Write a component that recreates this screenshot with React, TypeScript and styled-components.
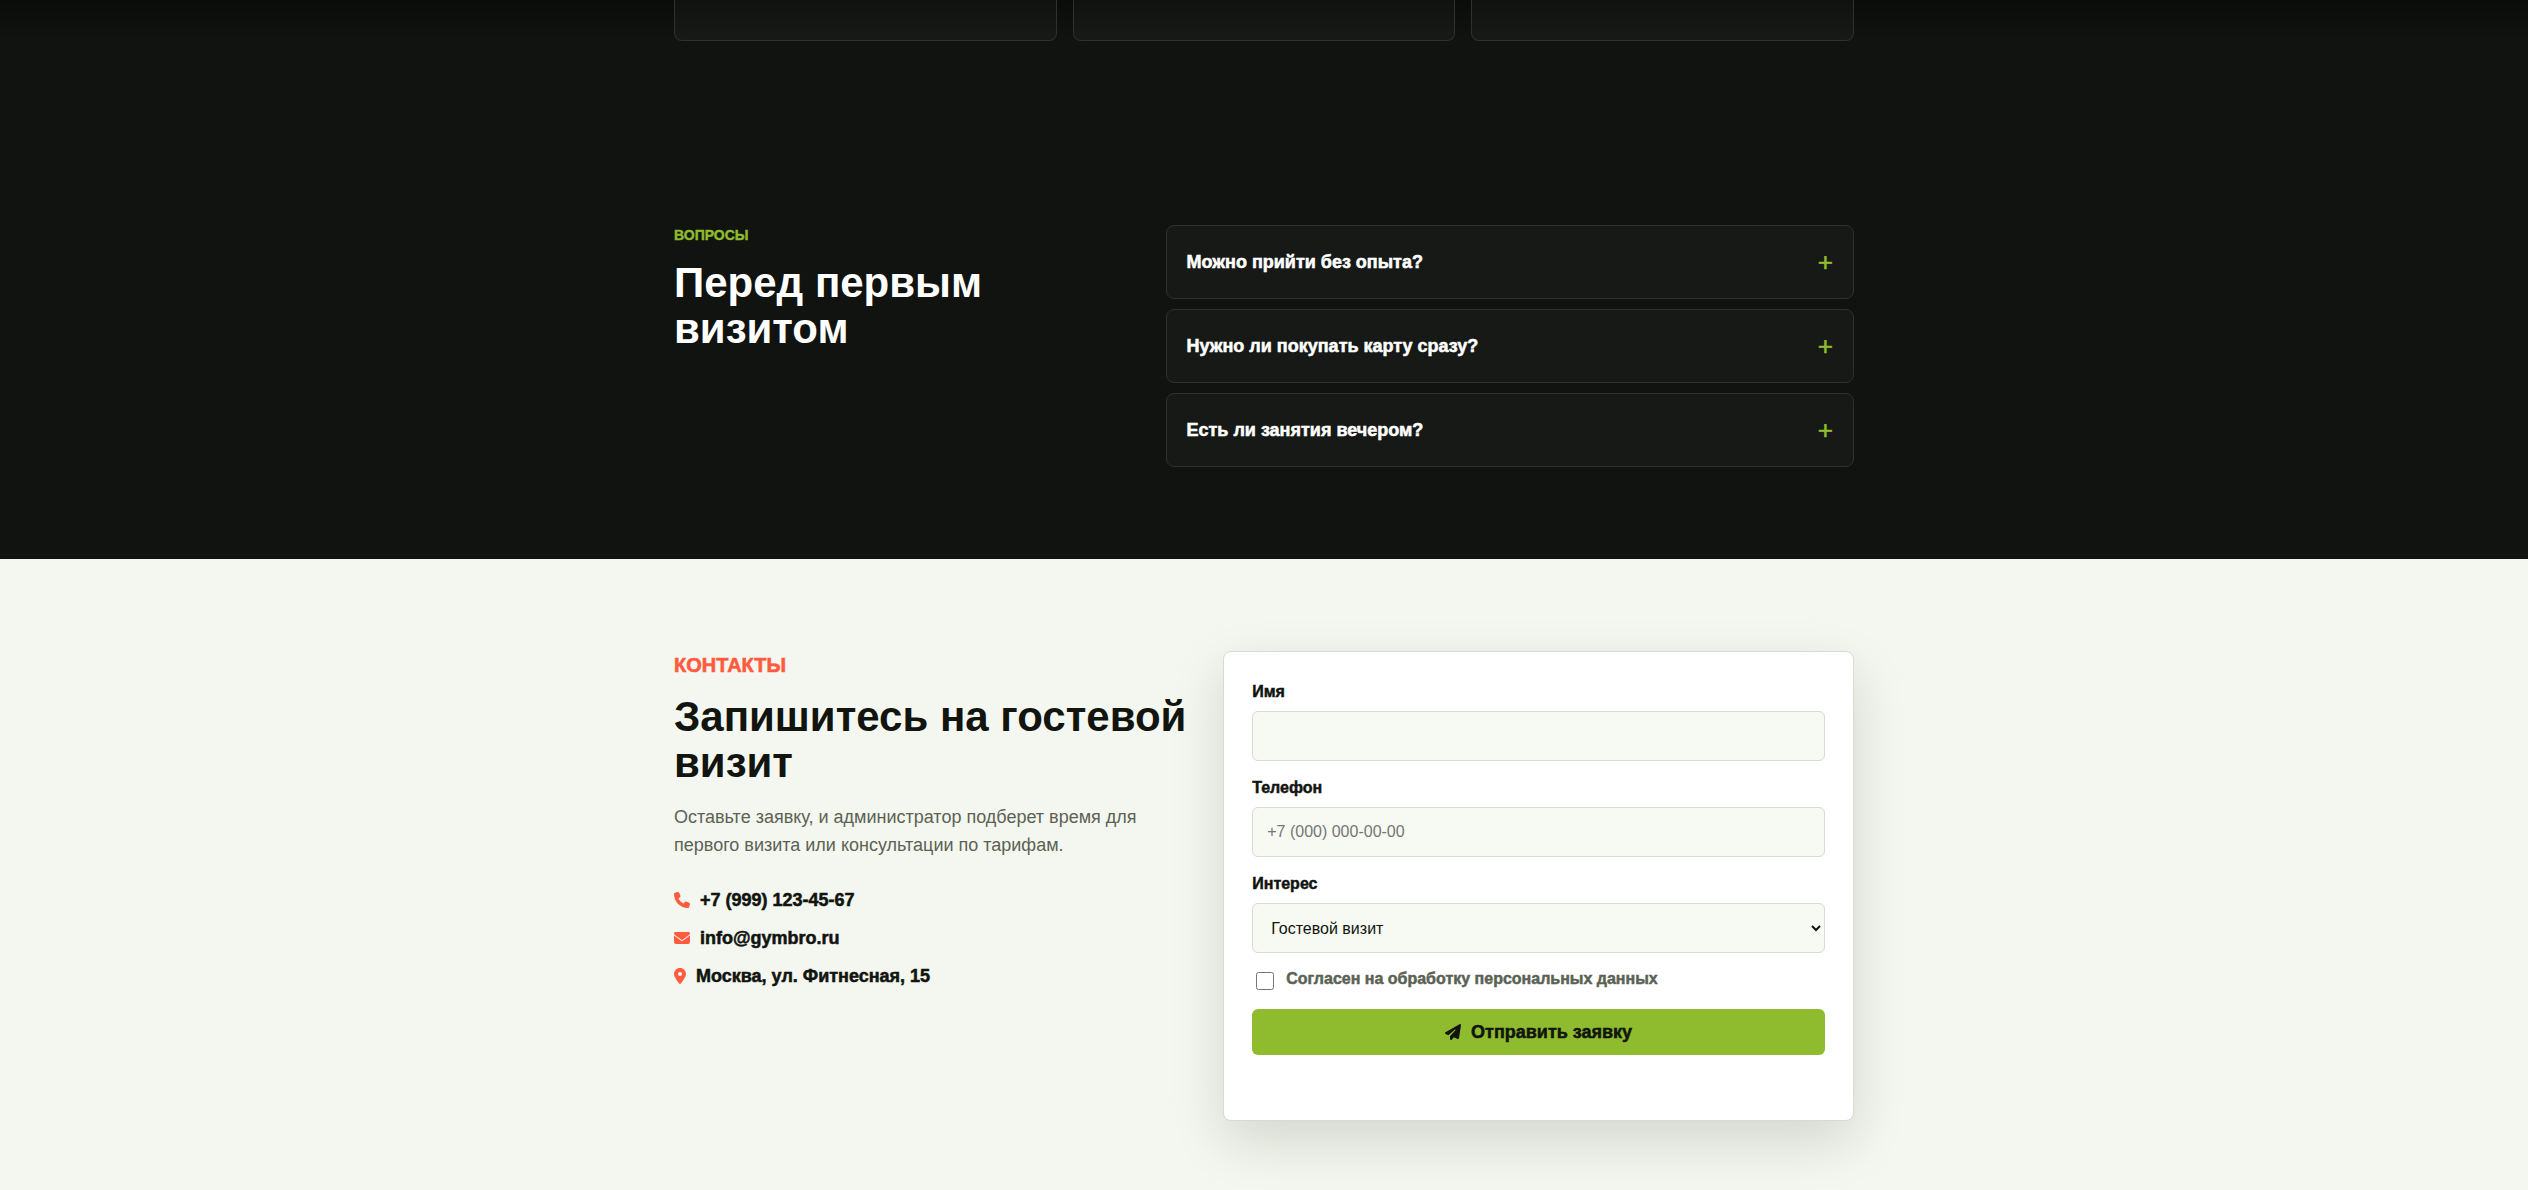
import React from "react";
import styled, { createGlobalStyle, css } from "styled-components";
import { FaEnvelope, FaLocationDot, FaPaperPlane, FaPhone } from "react-icons/fa6";

const color = {
  night: "#10130f",
  panel: "#161915",
  panelLine: "#2e312d",
  paper: "#f4f7ef",
  field: "#f7faf2",
  line: "#d7dbd3",
  ink: "#11140f",
  muted: "#5b6254",
  white: "#ffffff",
  lime: "#8fbc2f",
  coral: "#ff5b3f",
};

const text = '"Liberation Sans", Arial, sans-serif';

const heavy = css`
  font-weight: 900;
  -webkit-text-stroke: 0.03em currentColor;
`;

const GlobalStyle = createGlobalStyle`
  *, *::before, *::after { box-sizing: border-box; }
  body {
    margin: 0;
    height: 100vh;
    overflow: hidden;
    background: ${color.paper};
    color: ${color.ink};
    font: 400 16px/26px ${text};
  }
`;

const Container = styled.div`
  width: min(1180px, calc(100% - 32px));
  margin: 0 auto;
`;

const CardsSection = styled.section`
  background: linear-gradient(#0a0c09, ${color.night} 40px);
  padding-bottom: 92px;
`;

const CardRow = styled(Container)`
  display: grid;
  grid-template-columns: repeat(3, 1fr);
  gap: 16px;
`;

const CardBottom = styled.div`
  height: 41px;
  border: 1px solid ${color.panelLine};
  border-top: 0;
  border-radius: 0 0 8px 8px;
  background: linear-gradient(#10120f, ${color.panel} 36px);
`;

const FaqSection = styled.section`
  padding: 92px 0;
  background: ${color.night};
  color: ${color.white};
`;

const ContactSection = styled.section`
  padding: 92px 0;
  background: ${color.paper};
`;

const Split = styled(Container)<{ $left: string; $gap: number }>`
  display: grid;
  grid-template-columns: ${(p) => p.$left} 1fr;
  gap: ${(p) => p.$gap}px;
  align-items: start;
`;

const Kicker = styled.p<{ $large?: boolean }>`
  margin: 0 0 14px;
  color: ${(p) => (p.$large ? color.coral : color.lime)};
  font-size: ${(p) => (p.$large ? 20 : 14)}px;
  line-height: ${(p) => (p.$large ? 29 : 21)}px;
  text-transform: uppercase;
  ${heavy}
`;

const Title = styled.h2`
  margin: 0;
  font: 700 42px/46px ${text};
`;

const Lead = styled.p`
  margin: 17px 0 28px;
  color: ${color.muted};
  font-size: 18px;
  line-height: 28px;
`;

const FaqList = styled.div`
  display: grid;
  gap: 10px;
`;

const FaqItem = styled.details`
  border: 1px solid ${color.panelLine};
  border-radius: 8px;
  background: ${color.panel};
`;

const Question = styled.summary`
  display: flex;
  align-items: center;
  justify-content: space-between;
  padding: 20px;
  font-size: 18px;
  line-height: 32px;
  list-style: none;
  cursor: pointer;
  ${heavy}
`;

const Plus = styled.span`
  color: ${color.lime};
  font-size: 26px;
  font-weight: 400;
`;

const Answer = styled.p`
  margin: 0;
  padding: 0 20px 20px;
`;

const ContactList = styled.address`
  display: grid;
  gap: 12px;
  font-size: 18px;
  font-style: normal;
  line-height: 26px;
  ${heavy}
`;

const ContactRow = styled.div`
  display: flex;
  align-items: center;
  gap: 10px;
`;

const ContactLink = styled.a`
  color: inherit;
  text-decoration: none;
`;

const Glyph = styled.span<{ $narrow?: boolean }>`
  display: flex;
  color: ${color.coral};
  svg {
    width: ${(p) => (p.$narrow ? 12 : 16)}px;
    height: 16px;
  }
`;

const Form = styled.form`
  display: grid;
  gap: 15px;
  padding: 28px;
  border: 1px solid ${color.line};
  border-radius: 8px;
  background: ${color.white};
  box-shadow: 0 20px 54px rgba(17, 20, 15, 0.14);
`;

const Field = styled.label`
  display: grid;
  gap: 8px;
  font-size: 16px;
  line-height: 23px;
  ${heavy}
`;

const control = css`
  width: 100%;
  height: 50px;
  padding: 0 14px;
  border: 1px solid ${color.line};
  border-radius: 6px;
  background: ${color.field};
  color: ${color.ink};
  font: 400 16px ${text};
  -webkit-text-stroke: 0;
`;

const TextInput = styled.input`
  ${control}
`;

const Select = styled.select`
  ${control}
`;

const Consent = styled.label`
  display: flex;
  gap: 9px;
  color: ${color.muted};
  font-size: 16px;
  line-height: 22px;
  ${heavy}
`;

const Checkbox = styled.input`
  width: 18px;
  height: 18px;
  margin: 4px 3px 4px 4px;
`;

const Submit = styled.button`
  display: flex;
  align-items: center;
  justify-content: center;
  gap: 10px;
  min-height: 46px;
  border: 0;
  border-radius: 6px;
  background: ${color.lime};
  color: ${color.ink};
  font-family: ${text};
  font-size: 18px;
  line-height: 26px;
  ${heavy}
  svg {
    width: 16px;
    height: 16px;
  }
`;

const Status = styled.p`
  min-height: 22px;
  margin: 0;
`;

const questions = [
  {
    title: "Можно прийти без опыта?",
    answer: "Да, тренер поможет начать с первого занятия.",
  },
  {
    title: "Нужно ли покупать карту сразу?",
    answer: "Нет, начните с гостевого визита.",
  },
  {
    title: "Есть ли занятия вечером?",
    answer: "Да, вечерние занятия есть в расписании.",
  },
];

export default function App() {
  return (
    <>
      <GlobalStyle />
      <main>
        <CardsSection>
          <CardRow>
            <CardBottom />
            <CardBottom />
            <CardBottom />
          </CardRow>
        </CardsSection>

        <FaqSection>
          <Split $left="0.65fr" $gap={44}>
            <div>
              <Kicker>Вопросы</Kicker>
              <Title>Перед первым визитом</Title>
            </div>
            <FaqList>
              {questions.map((q) => (
                <FaqItem key={q.title}>
                  <Question>
                    {q.title}
                    <Plus aria-hidden="true">+</Plus>
                  </Question>
                  <Answer>{q.answer}</Answer>
                </FaqItem>
              ))}
            </FaqList>
          </Split>
        </FaqSection>

        <ContactSection>
          <Split $left="0.82fr" $gap={32}>
            <div>
              <Kicker $large>Контакты</Kicker>
              <Title>Запишитесь на гостевой визит</Title>
              <Lead>
                Оставьте заявку, и администратор подберет время для
                <br />
                первого визита или консультации по тарифам.
              </Lead>
              <ContactList>
                <ContactRow>
                  <Glyph>
                    <FaPhone />
                  </Glyph>
                  <ContactLink href="tel:+79991234567">+7 (999) 123-45-67</ContactLink>
                </ContactRow>
                <ContactRow>
                  <Glyph>
                    <FaEnvelope />
                  </Glyph>
                  <ContactLink href="mailto:info@gymbro.ru">info@gymbro.ru</ContactLink>
                </ContactRow>
                <ContactRow>
                  <Glyph $narrow>
                    <FaLocationDot />
                  </Glyph>
                  <span>Москва, ул. Фитнесная, 15</span>
                </ContactRow>
              </ContactList>
            </div>

            <Form onSubmit={(e) => e.preventDefault()}>
              <Field>
                Имя
                <TextInput type="text" name="name" autoComplete="name" />
              </Field>
              <Field>
                Телефон
                <TextInput type="tel" name="phone" placeholder="+7 (000) 000-00-00" />
              </Field>
              <Field>
                Интерес
                <Select name="interest">
                  <option>Гостевой визит</option>
                </Select>
              </Field>
              <Consent>
                <Checkbox type="checkbox" name="consent" />
                Согласен на обработку персональных данных
              </Consent>
              <Submit type="submit">
                <FaPaperPlane />
                Отправить заявку
              </Submit>
              <Status role="status" />
            </Form>
          </Split>
        </ContactSection>
      </main>
    </>
  );
}
